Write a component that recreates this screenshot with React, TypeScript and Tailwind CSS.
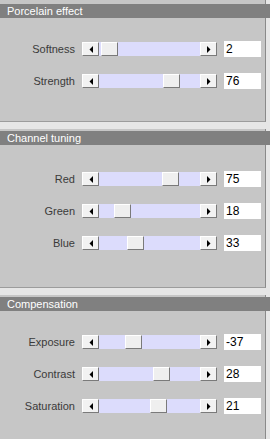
import React from "react";

type Row = { label: string; value: number; min: number; max: number };

const sections: { title: string; rows: Row[]; pt: string; gap: string; pb: string; last?: boolean }[] = [
  {
    title: "Porcelain effect",
    pt: "pt-[4px]",
    gap: "pt-[23px]",
    pb: "pb-[32px]",
    rows: [
      { label: "Softness", value: 2, min: 0, max: 100 },
      { label: "Strength", value: 76, min: 0, max: 100 },
    ],
  },
  {
    title: "Channel tuning",
    pt: "pt-[2px]",
    gap: "pt-[26px]",
    pb: "pb-[36px]",
    rows: [
      { label: "Red", value: 75, min: 0, max: 100 },
      { label: "Green", value: 18, min: 0, max: 100 },
      { label: "Blue", value: 33, min: 0, max: 100 },
    ],
  },
  {
    title: "Compensation",
    pt: "pt-[2px]",
    gap: "pt-[23px]",
    pb: "pb-[24px]",
    last: true,
    rows: [
      { label: "Exposure", value: -37, min: -100, max: 100 },
      { label: "Contrast", value: 28, min: -100, max: 100 },
      { label: "Saturation", value: 21, min: -100, max: 100 },
    ],
  },
];

const ArrowButton = ({ dir }: { dir: "left" | "right" }) => (
  <div className="w-[17px] h-full bg-[#f2f2f2] border-t border-l border-t-white border-l-white border-b border-r border-b-[#7a7a7a] border-r-[#7a7a7a] flex items-center justify-center">
    <svg width="4" height="7" viewBox="0 0 4 7">
      {dir === "left" ? (
        <polygon points="4,0 4,7 0.5,3.5" fill="#000" />
      ) : (
        <polygon points="0,0 0,7 3.5,3.5" fill="#000" />
      )}
    </svg>
  </div>
);

const Slider = ({ value, min, max }: { value: number; min: number; max: number }) => {
  const trackW = 101;
  const thumbW = 17;
  const left = Math.round(((value - min) / (max - min)) * (trackW - thumbW));
  return (
    <div className="w-[135px] h-[14px] flex">
      <ArrowButton dir="left" />
      <div className="relative flex-1 h-full bg-[#dcdcfc]">
        <div
          className="absolute top-0 h-full w-[17px] bg-[#efefef] border-t border-l border-t-white border-l-white border-b border-r border-b-[#7a7a7a] border-r-[#7a7a7a]"
          style={{ left }}
        />
      </div>
      <ArrowButton dir="right" />
    </div>
  );
};

export default function App() {
  return (
    <div
      className="w-[270px] h-[439px] bg-[#e6e6e6] flex flex-col overflow-hidden text-[11px]"
      style={{ fontFamily: '"Liberation Sans", Arial, sans-serif' }}
    >
      {sections.map((s, i) => (
        <div key={s.title} className={`${s.last ? "flex-1 flex flex-col" : ""} ${i > 0 ? "mt-[7px]" : ""}`}>
          <div className={`bg-[#c6c6c6] w-[266px] border-r border-[#8a8a8a] ${s.pt}`} />
          <div className="h-[14px] bg-[#808080] text-white pl-[7px] leading-[14px]">{s.title}</div>
          <div
            className={`w-[266px] bg-[#c6c6c6] border-r border-[#8a8a8a] ${s.gap} ${s.pb} flex flex-col gap-[16px] ${
              s.last ? "flex-1" : "border-b border-b-[#9c9c9c]"
            }`}
          >
            {s.rows.map((r) => (
              <div key={r.label} className="flex items-center h-[16px]">
                <div className="w-[82px] shrink-0 pr-[7px] text-right text-[#3a3a3a]">{r.label}</div>
                <Slider value={r.value} min={r.min} max={r.max} />
                <div className="ml-[7px] w-[37px] h-[16px] bg-white text-black text-[12px] leading-[16px] pl-[2px]">
                  {r.value}
                </div>
              </div>
            ))}
          </div>
        </div>
      ))}
    </div>
  );
}
